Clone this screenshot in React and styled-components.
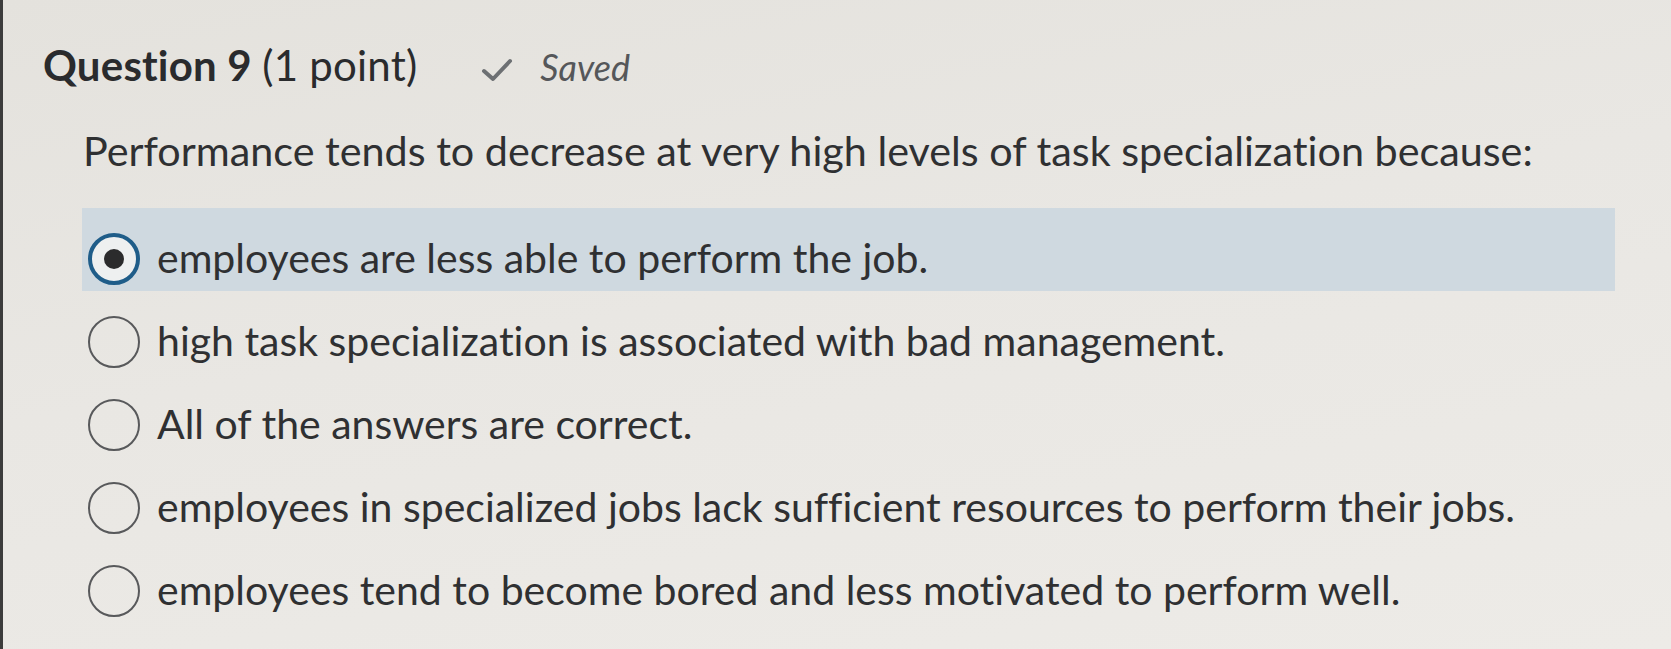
import React from "react";
import styled, { createGlobalStyle } from "styled-components";

const GlobalStyle = createGlobalStyle`
  html, body {
    margin: 0;
    padding: 0;
    background: #e8e6e1;
  }
  body {
    font-family: Lato, "Noto Sans", sans-serif;
    color: #2f3032;
    font-variant-ligatures: none;
  }
`;

/* PAGE */
const Page = styled.div`
  box-sizing: border-box;
  width: 1671px;
  height: 649px;
  overflow: hidden;
  padding-top: 40px;
  border-left: 3px solid #3c3c3c;
  background: linear-gradient(170deg, #e4e2dd 0%, #e9e7e3 45%, #edebe7 100%);
`;

const Header = styled.div`
  display: flex;
  align-items: baseline;
  margin-left: 40px;
  line-height: 1.2;
`;

const Title = styled.h2`
  margin: 0;
  font-size: 42px;
  font-weight: 700;
  color: #2a2b2d;
  letter-spacing: 0.2px;
`;

const Points = styled.span`
  font-weight: 400;
`;

const SavedStatus = styled.div`
  display: flex;
  align-items: baseline;
  margin-left: 64px;
  color: #55575a;
`;

const CheckIcon = styled.svg`
  width: 32px;
  height: 26px;
  margin-right: 27px;
  transform: translateY(2px);
`;

const SavedText = styled.span`
  font-size: 36px;
  font-style: italic;
`;

const Prompt = styled.p`
  margin: 36px 0 0 80px;
  font-size: 41.3px;
  line-height: 1.2;
  color: #2f3032;
`;

const OptionList = styled.div`
  display: flex;
  flex-direction: column;
  width: 1533px;
  margin: 32px 0 0 79px;
`;

const OptionRow = styled.label`
  display: flex;
  align-items: flex-start;
  height: 83px;
  padding-left: 6px;
  box-sizing: border-box;
  background: ${(p) => (p.$selected ? "#cfd9e0" : "transparent")};
  cursor: pointer;
`;

const Radio = styled.span`
  box-sizing: border-box;
  flex: none;
  width: 52px;
  height: 52px;
  margin-top: 25px;
  border-radius: 50%;
  display: flex;
  align-items: center;
  justify-content: center;
  border: ${(p) => (p.$checked ? "4px solid #1f5d89" : "2.5px solid #58595b")};
  background: ${(p) => (p.$checked ? "#eef0f0" : "transparent")};
`;

const Dot = styled.span`
  width: 20px;
  height: 20px;
  border-radius: 50%;
  background: #2b2b2c;
`;

const OptionText = styled.span`
  margin: 25px 0 0 17px;
  font-size: 41px;
  line-height: 1.2;
  color: #2f3032;
  white-space: nowrap;
`;

const options = [
  "employees are less able to perform the job.",
  "high task specialization is associated with bad management.",
  "All of the answers are correct.",
  "employees in specialized jobs lack sufficient resources to perform their jobs.",
  "employees tend to become bored and less motivated to perform well.",
];

export default function App() {
  const selected = 0;
  return (
    <>
      <GlobalStyle />
      <Page>
        <Header>
          <Title>
            Question 9 <Points>(1 point)</Points>
          </Title>
          <SavedStatus>
            <CheckIcon viewBox="0 0 32 26">
              <path
                d="M3 14 L12 22 L29 4"
                fill="none"
                stroke="#6d7073"
                strokeWidth="4"
                strokeLinecap="round"
                strokeLinejoin="round"
              />
            </CheckIcon>
            <SavedText>Saved</SavedText>
          </SavedStatus>
        </Header>
        <Prompt>
          Performance tends to decrease at very high levels of task specialization because:
        </Prompt>
        <OptionList>
          {options.map((text, i) => (
            <OptionRow key={i} $selected={i === selected}>
              <Radio $checked={i === selected}>{i === selected && <Dot />}</Radio>
              <OptionText>{text}</OptionText>
            </OptionRow>
          ))}
        </OptionList>
      </Page>
    </>
  );
}
